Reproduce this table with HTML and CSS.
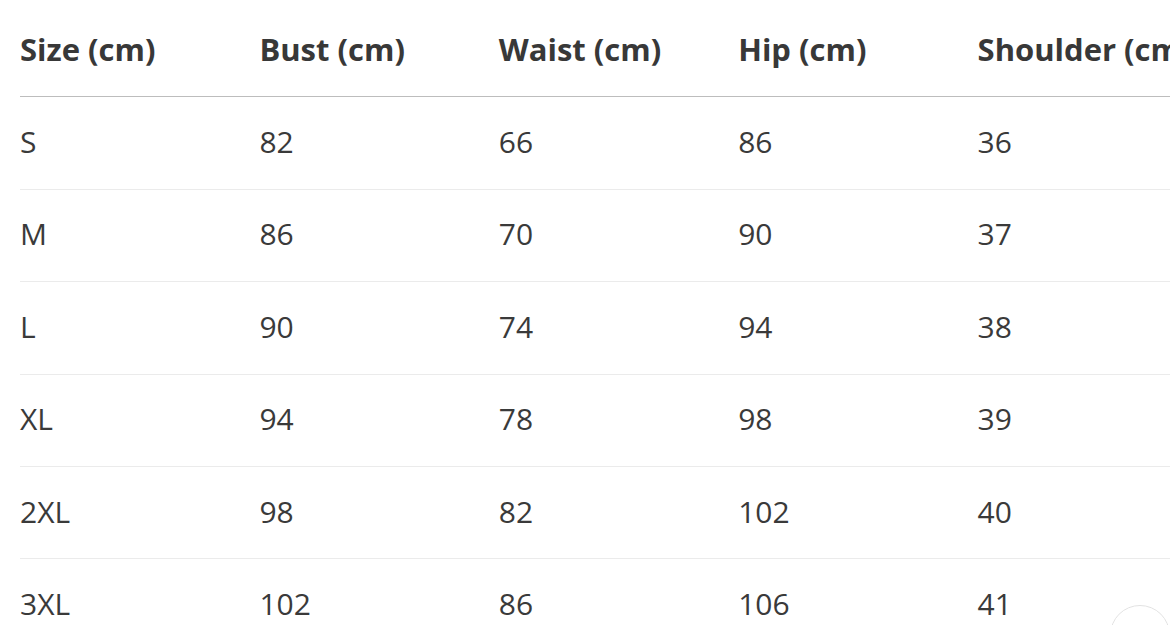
FILE: index.html
```html
<!DOCTYPE html>
<html lang="en">
<head>
<meta charset="utf-8">
<title>Size chart</title>
<link rel="stylesheet" href="styles.css">
</head>
<body>
<div class="wrap">
  <table class="size-table">
    <colgroup>
      <col class="c"><col class="c"><col class="c"><col class="c"><col class="c">
    </colgroup>
    <thead>
      <tr><th>Size (cm)</th><th>Bust (cm)</th><th>Waist (cm)</th><th>Hip (cm)</th><th>Shoulder (cm)</th></tr>
    </thead>
    <tbody>
      <tr><td>S</td><td>82</td><td>66</td><td>86</td><td>36</td></tr>
      <tr><td>M</td><td>86</td><td>70</td><td>90</td><td>37</td></tr>
      <tr><td>L</td><td>90</td><td>74</td><td>94</td><td>38</td></tr>
      <tr><td>XL</td><td>94</td><td>78</td><td>98</td><td>39</td></tr>
      <tr><td>2XL</td><td>98</td><td>82</td><td>102</td><td>40</td></tr>
      <tr><td>3XL</td><td>102</td><td>86</td><td>106</td><td>41</td></tr>
    </tbody>
  </table>
</div>
<button class="to-top" aria-label="Back to top"></button>
</body>
</html>
```

FILE: styles.css
```css
html, body {
  margin: 0;
  padding: 0;
  background: #ffffff;
  overflow: hidden;
}
body {
  font-family: "Open Sans", "Noto Sans", sans-serif;
  color: #333333;
}
.wrap {
  padding: 5px 0 0 20px;
}
.size-table {
  border-collapse: collapse;
  table-layout: fixed;
  width: 1197px;
}
.size-table .c {
  width: 239.4px;
}
.size-table th,
.size-table td {
  text-align: left;
  padding: 0 0 3px 0;
  height: 88.4px;
  white-space: nowrap;
  overflow: visible;
  vertical-align: middle;
}
.size-table th {
  font-size: 31px;
  font-weight: 700;
  color: #383838;
  border-bottom: 1px solid #bdbdbd;
}
.size-table td {
  font-size: 30px;
  font-weight: 400;
  color: #3a3a3a;
  border-bottom: 1px solid #ebebeb;
}
.to-top {
  position: fixed;
  left: 1110px;
  top: 605px;
  width: 60px;
  height: 60px;
  border-radius: 50%;
  border: 1.5px solid #e2e2e2;
  background: #ffffff;
  padding: 0;
}
```
